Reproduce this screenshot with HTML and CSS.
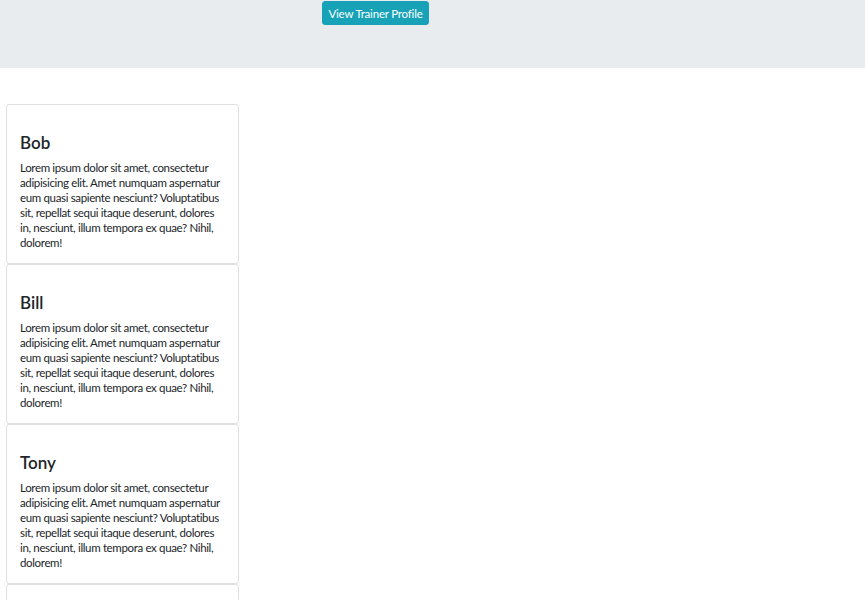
FILE: index.html
```html
<!DOCTYPE html>
<html>
<head>
<meta charset="utf-8">
<link rel="stylesheet" href="styles.css">
</head>
<body>
<header class="hero">
  <button class="btn-info">View Trainer Profile</button>
</header>
<main class="list">
  <div class="card">
    <h3 class="card-title">Bob</h3>
    <p class="card-text">Lorem ipsum dolor sit amet, consectetur adipisicing elit. Amet numquam aspernatur eum quasi sapiente nesciunt? Voluptatibus sit, repellat sequi itaque deserunt, dolores in, nesciunt, illum tempora ex quae? Nihil, dolorem!</p>
  </div>
  <div class="card">
    <h3 class="card-title">Bill</h3>
    <p class="card-text">Lorem ipsum dolor sit amet, consectetur adipisicing elit. Amet numquam aspernatur eum quasi sapiente nesciunt? Voluptatibus sit, repellat sequi itaque deserunt, dolores in, nesciunt, illum tempora ex quae? Nihil, dolorem!</p>
  </div>
  <div class="card">
    <h3 class="card-title">Tony</h3>
    <p class="card-text">Lorem ipsum dolor sit amet, consectetur adipisicing elit. Amet numquam aspernatur eum quasi sapiente nesciunt? Voluptatibus sit, repellat sequi itaque deserunt, dolores in, nesciunt, illum tempora ex quae? Nihil, dolorem!</p>
  </div>
  <div class="card">
    <h3 class="card-title">Steve</h3>
    <p class="card-text">Lorem ipsum dolor sit amet, consectetur adipisicing elit. Amet numquam aspernatur eum quasi sapiente nesciunt? Voluptatibus sit, repellat sequi itaque deserunt, dolores in, nesciunt, illum tempora ex quae? Nihil, dolorem!</p>
  </div>
</main>
</body>
</html>
```
FILE: styles.css
```css
html, body {
  margin: 0;
  padding: 0;
  background: #fff;
  font-family: Lato, "Open Sans", sans-serif;
  color: #212529;
}
.hero {
  background: #e9ecef;
  height: 68px;
  padding: 1px 0 0 322px;
  box-sizing: border-box;
}
.btn-info {
  display: block;
  width: 107px;
  height: 24px;
  background: #17a2b8;
  border: 1px solid #17a2b8;
  border-radius: 3px;
  color: #fff;
  font-family: Lato, sans-serif;
  font-size: 11.5px;
  letter-spacing: -0.2px;
  padding: 0;
  cursor: pointer;
}
.list {
  display: flex;
  flex-direction: column;
  width: 233px;
  margin: 36px 0 0 6px;
}
.card {
  border: 1px solid rgba(0, 0, 0, 0.125);
  border-radius: 3px;
  padding: 28px 12px 12px 13px;
  height: 160px;
  box-sizing: border-box;
  overflow: hidden;
  flex-shrink: 0;
}
.card-title {
  margin: 0 0 7px 0;
  font-size: 17px;
  font-weight: 600;
  line-height: 20px;
}
.card-text {
  margin: 0;
  font-size: 11.5px;
  letter-spacing: -0.35px;
  line-height: 15px;
}
```
